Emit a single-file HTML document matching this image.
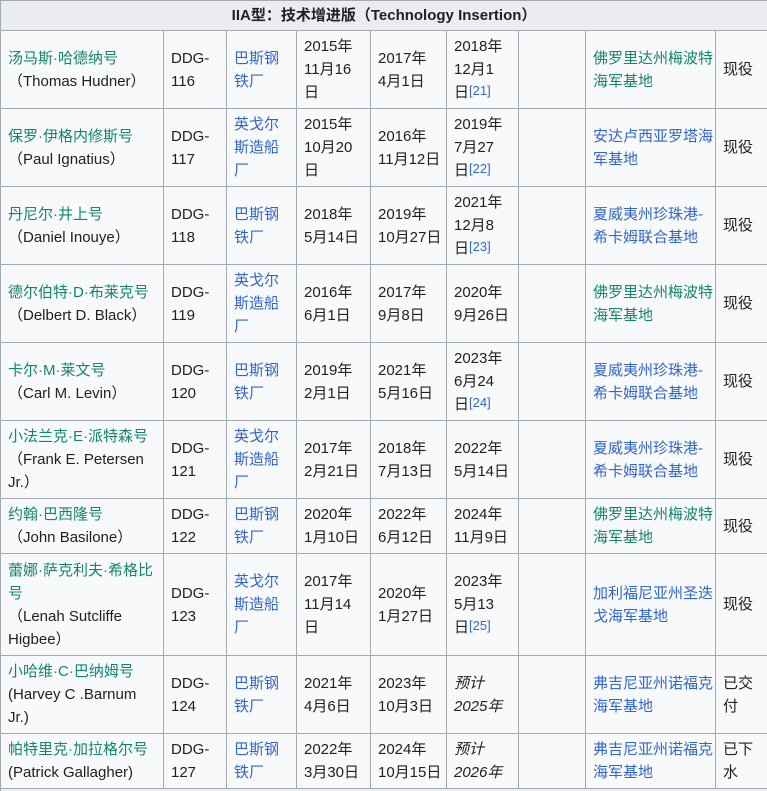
<!DOCTYPE html>
<html><head><meta charset="utf-8"><style>
html,body{margin:0;padding:0;background:#fff;}
body{font-family:"Liberation Sans","Noto Sans CJK SC",sans-serif;font-size:15px;color:#202122;}
table{border-collapse:collapse;table-layout:fixed;width:767px;background:#f8f9fa;position:absolute;left:0;top:0;}
td,th{border:1px solid #a2a9b1;padding:3px 7px;line-height:23px;vertical-align:middle;text-align:left;overflow:hidden;white-space:nowrap;}
th{background:#eaecf0;text-align:center;font-weight:bold;height:25px;padding:2px 7px;}
.g{color:#14866d}.b{color:#3366cc}
sup{font-size:13px;vertical-align:baseline;position:relative;top:-2px;color:#3366cc}
i{font-style:italic}
.last td{height:2px;padding:0;background:#eaecf0;border-bottom:none}
</style></head><body>
<table>
<colgroup><col style="width:163px"><col style="width:63px"><col style="width:70px"><col style="width:74px"><col style="width:76px"><col style="width:72px"><col style="width:67px"><col style="width:130px"><col style="width:52px"></colgroup>
<tr><th colspan="9">IIA型：技术增进版（Technology Insertion）</th></tr>
<tr style="height:78px"><td><span class="g">汤马斯·哈德纳号</span><br>（Thomas Hudner）</td><td>DDG-<br>116</td><td class="b">巴斯钢<br>铁厂</td><td>2015年<br>11月16<br>日</td><td>2017年<br>4月1日</td><td>2018年<br>12月1<br>日<sup>[21]</sup></td><td></td><td class="g">佛罗里达州梅波特<br>海军基地</td><td>现役</td></tr>
<tr style="height:78px"><td><span class="g">保罗·伊格内修斯号</span><br>（Paul Ignatius）</td><td>DDG-<br>117</td><td class="b">英戈尔<br>斯造船<br>厂</td><td>2015年<br>10月20<br>日</td><td>2016年<br>11月12日</td><td>2019年<br>7月27<br>日<sup>[22]</sup></td><td></td><td class="b">安达卢西亚罗塔海<br>军基地</td><td>现役</td></tr>
<tr style="height:78px"><td><span class="g">丹尼尔·井上号</span><br>（Daniel Inouye）</td><td>DDG-<br>118</td><td class="b">巴斯钢<br>铁厂</td><td>2018年<br>5月14日</td><td>2019年<br>10月27日</td><td>2021年<br>12月8<br>日<sup>[23]</sup></td><td></td><td class="b">夏威夷州珍珠港-<br>希卡姆联合基地</td><td>现役</td></tr>
<tr style="height:78px"><td><span class="g">德尔伯特·D·布莱克号</span><br>（Delbert D. Black）</td><td>DDG-<br>119</td><td class="b">英戈尔<br>斯造船<br>厂</td><td>2016年<br>6月1日</td><td>2017年<br>9月8日</td><td>2020年<br>9月26日</td><td></td><td class="g">佛罗里达州梅波特<br>海军基地</td><td>现役</td></tr>
<tr style="height:78px"><td><span class="g">卡尔·M·莱文号</span><br>（Carl M. Levin）</td><td>DDG-<br>120</td><td class="b">巴斯钢<br>铁厂</td><td>2019年<br>2月1日</td><td>2021年<br>5月16日</td><td>2023年<br>6月24<br>日<sup>[24]</sup></td><td></td><td class="b">夏威夷州珍珠港-<br>希卡姆联合基地</td><td>现役</td></tr>
<tr style="height:78px"><td><span class="g">小法兰克·E·派特森号</span><br>（Frank E. Petersen<br>Jr.）</td><td>DDG-<br>121</td><td class="b">英戈尔<br>斯造船<br>厂</td><td>2017年<br>2月21日</td><td>2018年<br>7月13日</td><td>2022年<br>5月14日</td><td></td><td class="b">夏威夷州珍珠港-<br>希卡姆联合基地</td><td>现役</td></tr>
<tr style="height:55px"><td><span class="g">约翰·巴西隆号</span><br>（John Basilone）</td><td>DDG-<br>122</td><td class="b">巴斯钢<br>铁厂</td><td>2020年<br>1月10日</td><td>2022年<br>6月12日</td><td>2024年<br>11月9日</td><td></td><td class="g">佛罗里达州梅波特<br>海军基地</td><td>现役</td></tr>
<tr style="height:102px"><td><span class="g">蕾娜·萨克利夫·希格比<br>号</span><br>（Lenah Sutcliffe<br>Higbee）</td><td>DDG-<br>123</td><td class="b">英戈尔<br>斯造船<br>厂</td><td>2017年<br>11月14<br>日</td><td>2020年<br>1月27日</td><td>2023年<br>5月13<br>日<sup>[25]</sup></td><td></td><td class="b">加利福尼亚州圣迭<br>戈海军基地</td><td>现役</td></tr>
<tr style="height:78px"><td><span class="g">小哈维·C·巴纳姆号</span><br>(Harvey C .Barnum<br>Jr.)</td><td>DDG-<br>124</td><td class="b">巴斯钢<br>铁厂</td><td>2021年<br>4月6日</td><td>2023年<br>10月3日</td><td><i>预计<br>2025年</i></td><td></td><td class="b">弗吉尼亚州诺福克<br>海军基地</td><td>已交<br>付</td></tr>
<tr style="height:55px"><td><span class="g">帕特里克·加拉格尔号</span><br>(Patrick Gallagher)</td><td>DDG-<br>127</td><td class="b">巴斯钢<br>铁厂</td><td>2022年<br>3月30日</td><td>2024年<br>10月15日</td><td><i>预计<br>2026年</i></td><td></td><td class="b">弗吉尼亚州诺福克<br>海军基地</td><td>已下<br>水</td></tr>
<tr class="last"><td colspan="9"></td></tr>
</table>
</body></html>
